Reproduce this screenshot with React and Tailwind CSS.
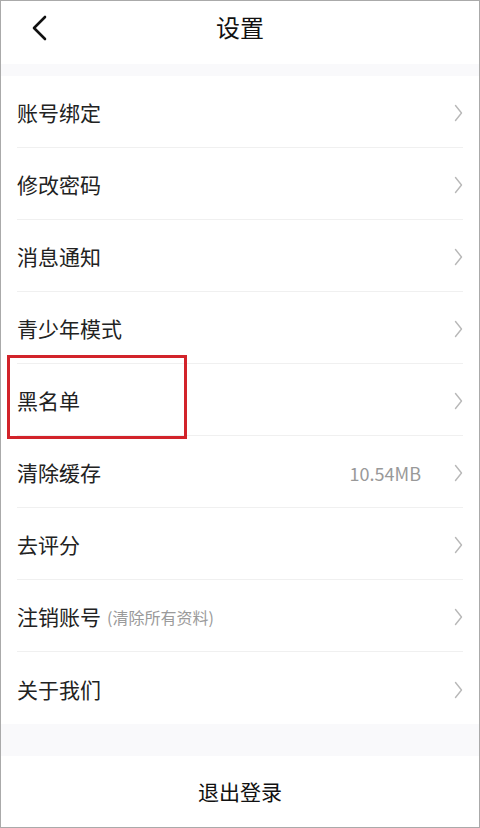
import React from 'react';

const font = { fontFamily: '"Noto Sans CJK SC", "Noto Sans", sans-serif' };

const rows = [
  { label: '账号绑定' },
  { label: '修改密码' },
  { label: '消息通知' },
  { label: '青少年模式' },
  { label: '黑名单', highlight: true },
  { label: '清除缓存', value: '10.54MB' },
  { label: '去评分' },
  { label: '注销账号', note: '(清除所有资料)' },
  { label: '关于我们', last: true },
];

const Chevron = () => (
  <svg width="9" height="18" viewBox="0 0 9 18" fill="none">
    <path d="M1.5 1.5 L7.5 9 L1.5 16.5" stroke="#b8b8b8" strokeWidth="1.4" strokeLinecap="round" strokeLinejoin="round" />
  </svg>
);

const SettingRow = ({ row }) => (
  <div className={`relative h-[72px] px-4 bg-white ${row.highlight ? 'z-10' : ''}`}>
    <div className={`h-full flex items-center justify-between ${row.last ? '' : 'border-b border-[#f0f0f0]'}`}>
      <div className="flex items-center pt-[3px]">
        <span className="text-[21px] text-[#222]">{row.label}</span>
        {row.note && <span className="ml-[6px] text-[16px] text-[#9a9a9a]">{row.note}</span>}
      </div>
      <div className="flex items-center pt-[3px]">
        {row.value && <span className="mr-[33px] text-[18px] text-[#999]">{row.value}</span>}
        <Chevron />
      </div>
    </div>
    {row.highlight && (
      <div className="absolute left-[6px] top-[-9px] w-[180px] h-[84px] border-[3px] border-[#d2232a] pointer-events-none" />
    )}
  </div>
);

export default function App() {
  return (
    <div className="w-[480px] h-[828px] border border-[#aaaaaa] bg-white flex flex-col overflow-hidden" style={font}>
      <div className="relative h-[63px] flex items-center justify-center bg-white">
        <button className="absolute left-[26px] top-[12px] p-[2px]">
          <svg width="20" height="26" viewBox="0 0 20 26" fill="none">
            <path d="M16 2 L5 13 L16 24" stroke="#111" strokeWidth="2.6" strokeLinecap="round" strokeLinejoin="round" />
          </svg>
        </button>
        <span className="text-[24px] text-[#111] -mt-[11px]">设置</span>
      </div>
      <div className="h-[12px] bg-[#f9f9fb]" />
      <div className="flex flex-col">
        {rows.map((r) => (
          <SettingRow key={r.label} row={r} />
        ))}
      </div>
      <div className="h-[32px] bg-[#f9f9fb]" />
      <div className="flex-1 flex items-center justify-center bg-white">
        <span className="text-[21px] text-[#111]">退出登录</span>
      </div>
    </div>
  );
}
